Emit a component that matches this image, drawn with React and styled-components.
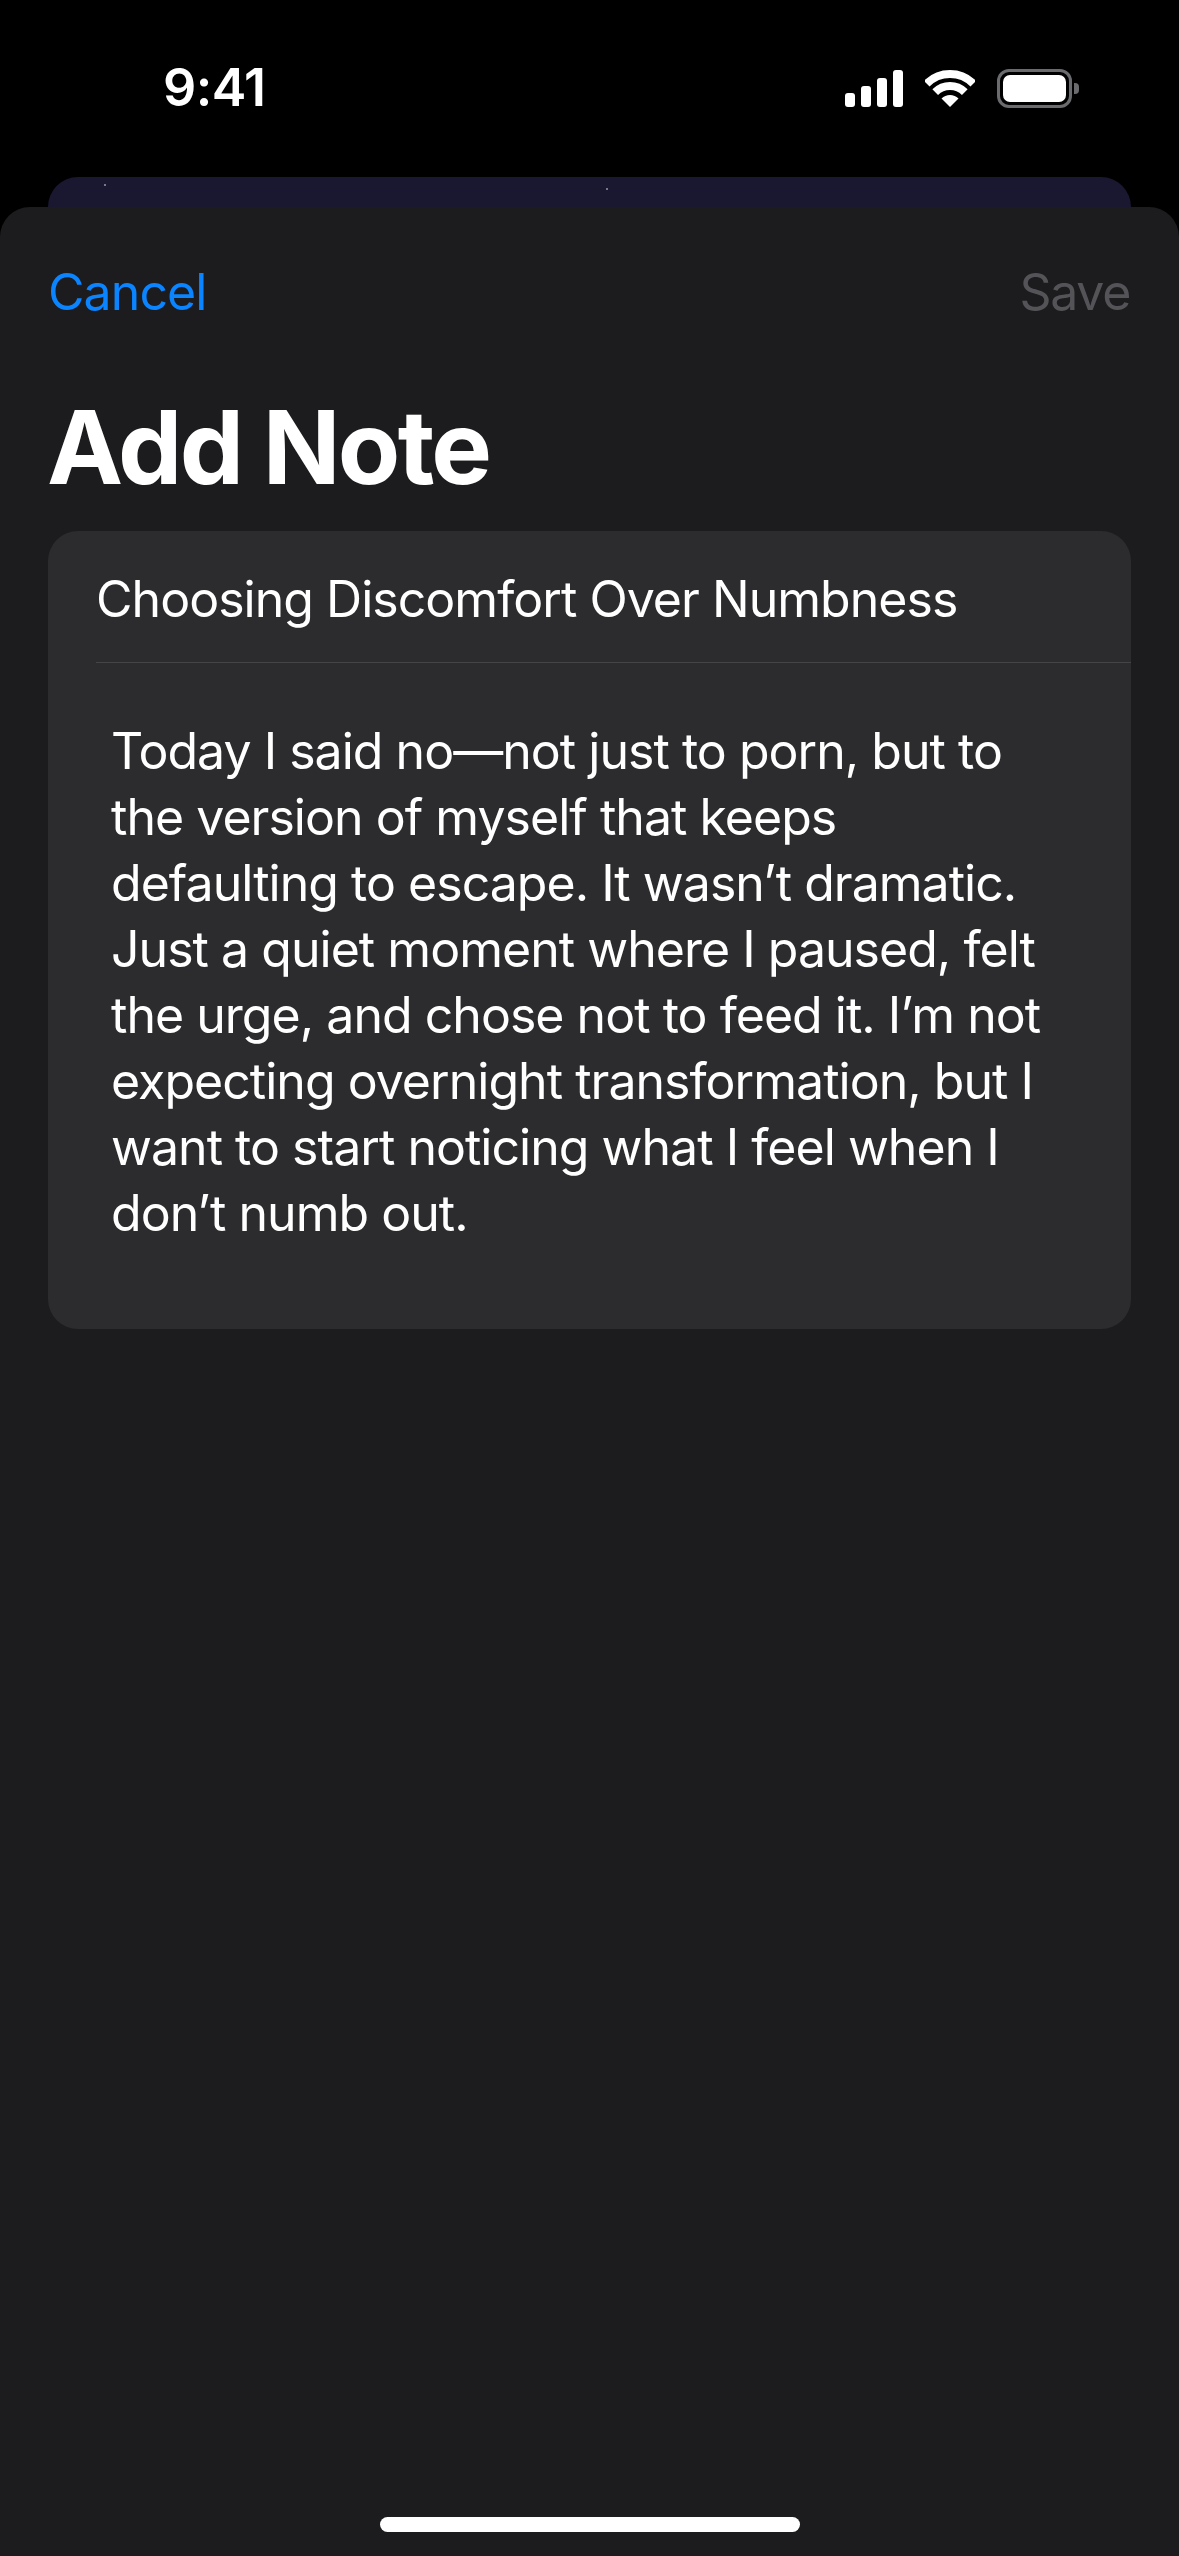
import React from 'react'
import styled, { createGlobalStyle } from 'styled-components'

const GlobalStyle = createGlobalStyle`
  html, body {
    margin: 0;
    padding: 0;
    background: #000;
  }
  * {
    box-sizing: border-box;
  }
`

const Screen = styled.div`
  width: 1179px;
  height: 2556px;
  display: flex;
  flex-direction: column;
  background: #000;
  overflow: hidden;
  font-family: Inter, "Liberation Sans", sans-serif;
  color: #fff;
`

const StatusBar = styled.div`
  height: 177px;
  flex: none;
  display: flex;
  justify-content: space-between;
  align-items: flex-start;
  padding: 60px 107px 0 163px;
`

const Time = styled.span`
  font-size: 52px;
  line-height: 56px;
  font-weight: 600;
  letter-spacing: -0.6px;
`

const StatusIcons = styled.div`
  display: flex;
  align-items: flex-end;
  gap: 22px;
  margin-top: 9px;
  margin-left: auto;
`

const Signal = styled.div`
  display: flex;
  align-items: flex-end;
  gap: 6px;
  height: 37px;
`

const SignalBar = styled.i`
  display: block;
  width: 10px;
  height: ${p => p.$h}px;
  border-radius: 3px;
  background: #fff;
`

const Battery = styled.div`
  position: relative;
  width: 75px;
  height: 39px;
  margin-bottom: -1px;
  padding: 3px;
  border: 3px solid #6a6b6e;
  border-radius: 12px;

  &::before {
    content: '';
    display: block;
    height: 100%;
    background: #fff;
    border-radius: 7px;
  }
  &::after {
    content: '';
    position: absolute;
    right: -10px;
    top: 11px;
    width: 5px;
    height: 11px;
    background: #6a6b6e;
    border-radius: 0 4px 4px 0;
  }
`

const PeekCard = styled.div`
  position: relative;
  flex: none;
  height: 30px;
  margin: 0 48px;
  background: #1a1730;
  border-radius: 30px 30px 0 0;
`

const Star = styled.i`
  position: absolute;
  left: ${p => p.$x}px;
  top: ${p => p.$y}px;
  width: 2px;
  height: 2px;
  background: #77768a;
`

const Sheet = styled.div`
  flex: 1;
  display: flex;
  flex-direction: column;
  background: #1c1c1e;
  border-radius: 30px 30px 0 0;
`

const NavRow = styled.div`
  display: flex;
  justify-content: space-between;
  padding: 53px 49px 0 48px;
`

const NavButton = styled.button`
  padding: 0;
  border: 0;
  background: none;
  font: 400 50px/64px Inter, "Liberation Sans", sans-serif;
  letter-spacing: ${p => (p.$disabled ? '-1.3px' : '-0.9px')};
  color: ${p => (p.$disabled ? '#545458' : '#0a84ff')};
`

const Title = styled.h1`
  margin: 61px 0 0 47px;
  font-size: 102px;
  line-height: 124px;
  font-weight: 700;
  letter-spacing: -2.7px;
`

const NoteCard = styled.div`
  margin: 22px 48px 0;
  height: 798px;
  background: #2c2c2e;
  border-radius: 30px;
`

const NoteTitle = styled.div`
  height: 132px;
  margin-left: 48px;
  padding-top: 36px;
  font-size: 50px;
  line-height: 64px;
  letter-spacing: -0.97px;
  border-bottom: 1.5px solid #454547;
`

const NoteBody = styled.p`
  margin: 0;
  padding: 55px 61px 0 63px;
  font-size: 50px;
  line-height: 66px;
  letter-spacing: -0.97px;
`

const HomeBar = styled.div`
  width: 420px;
  height: 15px;
  margin: auto auto 24px;
  background: #fff;
  border-radius: 8px;
`

const bars = [14, 21, 29, 37]

const App = () => {
  return (
    <Screen>
      <GlobalStyle />
      <StatusBar>
        <Time>9:41</Time>
        <StatusIcons>
          <Signal>
            {bars.map(h => <SignalBar key={h} $h={h} />)}
          </Signal>
          <svg width="50" height="37" viewBox="0 0 50 37">
            <path d="M1.7 13.7a33 33 0 0 1 46.6 0" fill="none" stroke="#fff" strokeWidth="8" />
            <path d="M10.2 22.2a21 21 0 0 1 29.6 0" fill="none" stroke="#fff" strokeWidth="8" />
            <path d="M25 37 L16.5 28.5 a12 12 0 0 1 17 0 Z" fill="#fff" />
          </svg>
          <Battery />
        </StatusIcons>
      </StatusBar>
      <PeekCard>
        <Star $x={56} $y={7} />
        <Star $x={558} $y={11} />
      </PeekCard>
      <Sheet>
        <NavRow>
          <NavButton>Cancel</NavButton>
          <NavButton $disabled>Save</NavButton>
        </NavRow>
        <Title>Add Note</Title>
        <NoteCard>
          <NoteTitle>Choosing Discomfort Over Numbness</NoteTitle>
          <NoteBody>
            Today I said no—not just to porn, but to the version of myself that keeps defaulting to escape. It wasn’t dramatic. Just a quiet moment where I paused, felt the urge, and chose not to feed it. I’m not expecting overnight transformation, but I want to start noticing what I feel when I don’t numb out.
          </NoteBody>
        </NoteCard>
        <HomeBar />
      </Sheet>
    </Screen>
  )
}

export default App
